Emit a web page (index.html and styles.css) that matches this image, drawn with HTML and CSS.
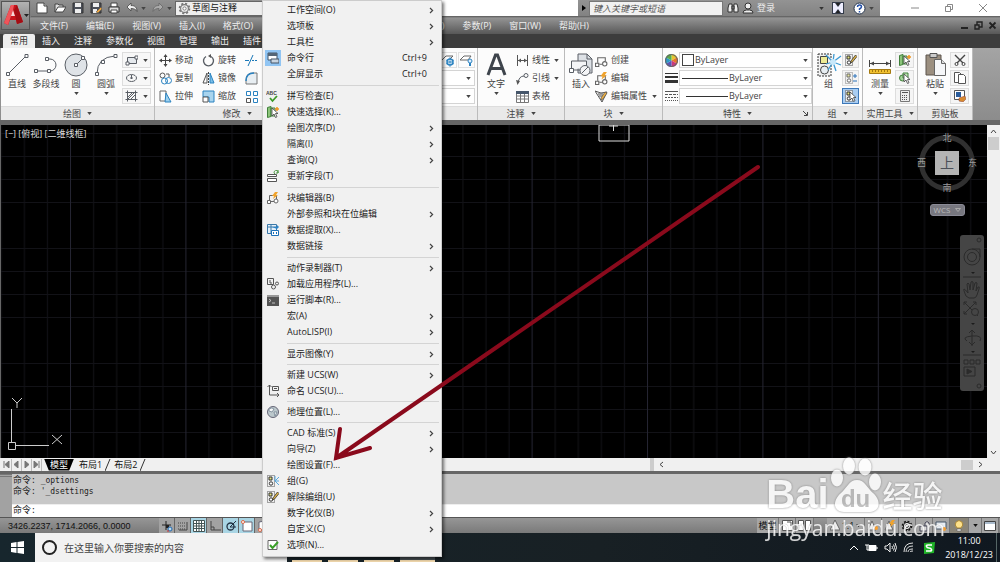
FILE: index.html
```html
<!DOCTYPE html>
<html lang="zh-CN">
<head>
<meta charset="utf-8">
<meta name="viewport" content="width=device-width, initial-scale=1">
<title>AutoCAD</title>
<link rel="stylesheet" href="styles.css">
</head>
<body>
<svg class="defs" aria-hidden="true">
  <symbol id="down" viewBox="0 0 6 4"><path d="M0 0h6L3 4z" fill="currentColor"/></symbol>
  <symbol id="right" viewBox="0 0 5 7"><path d="M1 1l2.600 2.500L1 6" fill="none" stroke="currentColor" stroke-width="1.200"/></symbol>
  <symbol id="bolt" viewBox="0 0 12 12"><path d="M8 0L5 4h2L6 7l5-4H9l2-3z" fill="#f0a32c"/></symbol>
  <symbol id="block" viewBox="0 0 12 12"><path d="M2.500 8V3.500h7V7M4 9.500h3" fill="none" stroke="#666"/><path d="M.500 8.500h3v3h-3z" fill="#fff" stroke="#666"/><circle cx="9" cy="9" r="2" fill="#fff" stroke="#666"/></symbol>
  <symbol id="group" viewBox="0 0 12 12"><path d="M.500.500h7v11h-7z" fill="#eee" stroke="#555" stroke-dasharray="1 1"/><path d="M2 2h3v3H2z" fill="#e4e27c" stroke="#333"/><circle cx="4" cy="8.500" r="1.700" fill="#fff" stroke="#333"/></symbol>
  <symbol id="cursor" viewBox="0 0 12 12"><path d="M5 2v8l2-2 1.500 3.500 1.500-.700L8.500 7.500H11z" fill="#fff" stroke="#444" stroke-width=".8"/></symbol>
  <symbol id="gear" viewBox="0 0 12 12"><circle cx="6" cy="6" r="4.500" fill="none" stroke="currentColor" stroke-width="1.700" stroke-dasharray="1.900 1.630"/><circle cx="6" cy="6" r="3.600" fill="#eee" stroke="currentColor"/><circle cx="6" cy="6" r="1.500" fill="#fff" stroke="currentColor" stroke-width=".8"/></symbol>
  <symbol id="quick" viewBox="0 0 12 12"><path d="M.500 1.500L4 .500v10l-3.500 1z" fill="#8cc47a" stroke="#40803a"/><path d="M4 2h4v8H4z" fill="#cfe8c4" stroke="#40803a"/><use href="#cursor"/><path d="M8 3h4M10 1v4" stroke="#ee9520" stroke-width="1.500"/></symbol>
  <symbol id="pencil" viewBox="0 0 12 12"><path d="M6 7l4.500-6L12 2.500 7.500 8 5.500 9z" fill="#e1b545" stroke="#333" stroke-width=".8"/></symbol>
</svg>

<div class="app">
  <header class="top">
    <button class="logo" aria-label="应用程序菜单">
      <svg width="28" height="27" viewBox="0 0 28 27"><path d="M2 21L9 3h6l6 17-6 2-1-4H8l-2 5z" fill="#c8141c"/><path d="M9 3h3l-1 5-3 9-2 6-4-2z" fill="#f0545a"/><path d="M11 8l2 6h-4z" fill="#f6d8d8"/><path d="M21 20l-6 2-3-14 3-5z" fill="#a30d14"/><path d="M22 12h5l-2.500 3z" fill="#222"/></svg>
    </button>
    <div class="titlebar">
      <div class="quick">
        <button class="qb" aria-label="新建"><svg width="12" height="12" viewBox="0 0 12 12"><path d="M1 1h7l3 3v7H1z" fill="#fff" stroke="#444"/><path d="M8 1v3h3" fill="#ccc" stroke="#444"/></svg></button>
        <button class="qb" aria-label="打开"><svg width="12" height="12" viewBox="0 0 12 12"><path d="M1 10V2h3l1 1h4v2" fill="#ddd" stroke="#444"/><path d="M1 10l3-5h8l-3 5z" fill="#fff" stroke="#444"/></svg></button>
        <button class="qb" aria-label="保存"><svg width="12" height="12" viewBox="0 0 12 12"><path d="M1 1h10v10H1z" fill="#4b4f58" stroke="#333"/><path d="M3 1h6v4H3zM3 7h6v4H3z" fill="#eee"/></svg></button>
        <button class="qb" aria-label="另存为"><svg width="12" height="12" viewBox="0 0 12 12"><path d="M1 1h10v10H1z" fill="#4b4f58" stroke="#333"/><path d="M3 1h6v4H3zM3 7h4v4H3z" fill="#eee"/><path d="M6 10l5-5 1 2-4 4z" fill="#f0a840" stroke="#555" stroke-width=".6"/></svg></button>
        <button class="qb" aria-label="打印"><svg width="12" height="12" viewBox="0 0 12 12"><path d="M3 1h6v4H3z" fill="#fff" stroke="#444"/><path d="M1 5h10v5H1z" fill="#ddd" stroke="#333"/><path d="M3 8h6v3H3z" fill="#fff" stroke="#444"/></svg></button>
        <button class="qb wide" aria-label="放弃"><svg width="12" height="12" viewBox="0 0 12 12"><path d="M1 5l4-4v2.500c4 0 6 2 6 6-1-2-3-3-6-3V9z" fill="#eee" stroke="#444" stroke-width=".8"/></svg><svg class="dn"><use href="#down"/></svg></button>
        <button class="qb wide" aria-label="重做"><svg width="12" height="12" viewBox="0 0 12 12"><path d="M11 5L7 1v2.500c-4 0-6 2-6 6 1-2 3-3 6-3V9z" fill="#aaa" stroke="#666" stroke-width=".8"/></svg><svg class="dn"><use href="#down"/></svg></button>
        <div class="workspace"><svg width="13" height="13" class="gray"><use href="#gear"/></svg><select aria-label="工作空间"><option>草图与注释</option></select></div>
      </div>
      <div class="info">
        <button class="flip" aria-label="展开"><svg width="4" height="6" viewBox="0 0 4 6"><path d="M0 0l4 3-4 3z"/></svg></button>
        <input class="search" type="text" placeholder="键入关键字或短语" aria-label="键入关键字或短语">
        <button aria-label="搜索"><svg width="12" height="12" viewBox="0 0 12 12"><path d="M2 2h3v8H1V6zM10 2H7v8h4V6zM5 4h2v3H5z" fill="#eee" stroke="#333"/></svg></button>
        <button class="login"><svg width="12" height="12" viewBox="0 0 12 12"><circle cx="6" cy="4" r="3" fill="#eee" stroke="#333"/><path d="M1 11q0-3 3.500-3h3q3.500 0 3.500 3z" fill="#eee" stroke="#333"/></svg><span>登录</span><svg class="dn"><use href="#down"/></svg></button>
        <button aria-label="Exchange"><svg width="12" height="12" viewBox="0 0 12 12"><path d="M0 0h12v12H0z" fill="#333b4a"/><path d="M1 1h2l3 4 3-4h2v10H9L6 7l-3 4H1z" fill="#eef"/><path d="M4 1h4L6 4zM4 11h4L6 8z" fill="#222"/></svg></button>
        <button class="help" aria-label="帮助"><svg width="13" height="13" viewBox="0 0 13 13"><circle cx="6.500" cy="6.500" r="5.500" fill="#fff" stroke="#23324a"/><path d="M4.500 5q0-2 2-2t2 1.700q0 1-2 2.300v1M6.500 9v1.500" fill="none" stroke="#234fa8" stroke-width="1.500"/></svg><svg class="dn"><use href="#down"/></svg></button>
      </div>
      <div class="window-buttons">
        <button aria-label="最小化"><svg width="10" height="10" viewBox="0 0 10 10"><path d="M1 5h8"/></svg></button>
        <button aria-label="还原"><svg width="10" height="10" viewBox="0 0 10 10"><path d="M1.500 3.500h5v5h-5zM3.500 3V1.500h5v5H7"/></svg></button>
        <button aria-label="关闭"><svg width="10" height="10" viewBox="0 0 10 10"><path d="M1 1l8 8M9 1L1 9"/></svg></button>
      </div>
    </div>
    <nav class="menubar">
      <button>文件(F)</button><button>编辑(E)</button><button>视图(V)</button><button>插入(I)</button><button>格式(O)</button><button class="after-menu">修改(M)</button><button>参数(P)</button><button>窗口(W)</button><button>帮助(H)</button>
      <div class="doc-buttons">
        <button aria-label="最小化文档"><svg width="9" height="9" viewBox="0 0 9 9"><path d="M1 7h7" stroke="#222" stroke-width="2"/></svg></button>
        <button aria-label="还原文档"><svg width="9" height="9" viewBox="0 0 9 9"><path d="M1 4h4v4H1zM3 4V1h5v5H5" fill="none" stroke="#222" stroke-width="1.400"/></svg></button>
        <button aria-label="关闭文档"><svg width="9" height="9" viewBox="0 0 9 9"><path d="M1.500 1.500l6 6M7.500 1.500l-6 6" stroke="#222" stroke-width="1.800"/></svg></button>
      </div>
    </nav>
  </header>

  <nav class="tabs"><button class="active">常用</button><button>插入</button><button>注释</button><button>参数化</button><button>视图</button><button>管理</button><button>输出</button><button>插件</button></nav>

  <section class="ribbon">
    <div class="panel p-draw">
      <div class="body">
        <button class="big"><svg width="26" height="26" viewBox="0 0 26 26" class="line"><path d="M4 22L22 4"/><path d="M2.500 20.500h3v3h-3zM21 2.500h3v3h-3z" fill="#fff"/></svg>直线</button>
        <button class="big"><svg width="26" height="26" viewBox="0 0 26 26" class="line"><path d="M4 19h13a6 6 0 0 0 0-12h-3"/><path d="M1.500 17.500h3v3h-3zM14.500 17.500h3v3h-3zM12.500 5.500h3v3h-3z" fill="#fff"/></svg>多段线</button>
        <button class="big"><svg width="26" height="26" viewBox="0 0 26 26" class="line"><circle cx="13" cy="13" r="11" fill="#dfe3e7"/><path d="M13 13l6-6"/><path d="M11.500 11.500h3v3h-3zM18.500 4.500h3v3h-3z" fill="#fff"/></svg>圆<svg class="dn"><use href="#down"/></svg></button>
        <button class="big"><svg width="26" height="26" viewBox="0 0 26 26" class="line"><path d="M4 22Q4 5 22 4"/><path d="M2.500 20.500h3v3h-3zM8.500 8.500h3v3h-3zM21 2.500h3v3h-3z" fill="#fff"/></svg>圆弧<svg class="dn"><use href="#down"/></svg></button>
        <div class="stack split">
          <button aria-label="矩形"><svg width="13" height="12" viewBox="0 0 13 12" class="line"><path d="M2.500 3.500h9v6h-9z" fill="#e5e9ed"/><path d="M1 8h3v3H1zM10 2h3v3h-3z" fill="#fff"/></svg><svg class="dn"><use href="#down"/></svg></button>
          <button aria-label="椭圆"><svg width="13" height="12" viewBox="0 0 13 12" class="line"><ellipse cx="6.500" cy="6" rx="5" ry="3.500"/><path d="M6.500 3v4M5 6h3"/></svg><svg class="dn"><use href="#down"/></svg></button>
          <button aria-label="图案填充"><svg width="13" height="12" viewBox="0 0 13 12" class="line"><path d="M2.500.500v11M10.500.500v11M.500 2.500h12M.500 9.500h12M3 7l4-4M3 9l6-6M6 9l4-4"/></svg><svg class="dn"><use href="#down"/></svg></button>
        </div>
      </div>
      <button class="title">绘图<svg class="dn"><use href="#down"/></svg></button>
    </div>
    <div class="panel p-modify">
      <div class="body modify">
        <button class="row"><svg width="13" height="13" viewBox="0 0 13 13"><path d="M6.500 1v11M1 6.500h11" stroke="#444"/><path d="M4.500 3l2-3 2 3zM4.500 10l2 3 2-3zM3 4.500l-3 2 3 2zM10 4.500l3 2-3 2z" fill="#444"/></svg>移动</button>
        <button class="row"><svg width="13" height="13" viewBox="0 0 13 13" class="line"><path d="M4 2.500a5 5 0 1 0 5 0" stroke-width="1.400"/><path d="M9 0v4L6 2z" fill="#555" stroke="none"/></svg>旋转</button>
        <button class="row" aria-label="修剪"><svg width="13" height="13" viewBox="0 0 13 13"><path d="M0 6.500h4M3 12L8 1" stroke="#1a78b8"/><path d="M7 6.500h6" stroke="#1a78b8" stroke-dasharray="2 1"/></svg></button>
        <button class="row"><svg width="13" height="13" viewBox="0 0 13 13" fill="none"><circle cx="3.500" cy="3.500" r="2.500" stroke="#555"/><path d="M7 2h3v3" stroke="#555"/><circle cx="5.500" cy="9" r="3" stroke="#2a82c0" fill="#fff"/><circle cx="9.500" cy="8.500" r="3" stroke="#2a82c0"/></svg>复制</button>
        <button class="row"><svg width="13" height="13" viewBox="0 0 13 13"><path d="M5 1v10H1z" fill="#fff" stroke="#555"/><path d="M8 1v10h4z" fill="#7cc0e8" stroke="#2a82c0"/><path d="M6.500 0v13" stroke="#444" stroke-dasharray="2 1"/></svg>镜像</button>
        <button class="row" aria-label="圆角"><svg width="13" height="13" viewBox="0 0 13 13"><path d="M1 12V8q0-7 7-7h4v11z" fill="#e8eef2" stroke="#777"/><path d="M1 9q0-8 8-8" fill="none" stroke="#2a82c0" stroke-width="1.500"/></svg></button>
        <button class="row"><svg width="13" height="13" viewBox="0 0 13 13"><path d="M1 1h6v10H1z" fill="#fff" stroke="#666"/><path d="M7 3l5 9H6z" fill="#9cd0ee" stroke="#2a82c0"/></svg>拉伸</button>
        <button class="row"><svg width="13" height="13" viewBox="0 0 13 13"><path d="M1 1h11v11H7V7H1z" fill="#a8d4ee" stroke="#2a82c0"/><path d="M1 7h5v5H1z" fill="#fff" stroke="#555"/></svg>缩放</button>
        <button class="row" aria-label="阵列"><svg width="13" height="13" viewBox="0 0 13 13" fill="#fff"><path d="M1.500 1.500h4v4h-4zM8.500 1.500h4v4h-4zM8.500 8.500h4v4h-4z" stroke="#2a82c0"/><path d="M1.500 8.500h4v4h-4z" stroke="#555"/></svg></button>
      </div>
      <button class="title">修改<svg class="dn"><use href="#down"/></svg></button>
    </div>
    <div class="panel p-layer">
      <div class="body layers">
        <div class="layer-tools">
          <button aria-label="图层冻结"><svg width="14" height="13" viewBox="0 0 14 13"><path d="M1 6l4-4h7l-3 3" fill="#fff" stroke="#666"/><circle cx="9" cy="8" r="3" fill="#fff" stroke="#2a82c0" stroke-width="1.500"/><path d="M9 3v10M5 6l8 4M13 6l-8 4" stroke="#2a82c0" stroke-width=".7"/></svg></button>
          <button aria-label="图层关闭"><svg width="14" height="13" viewBox="0 0 14 13"><path d="M1 6l4-4h7l-3 4z" fill="#fff" stroke="#666"/><circle cx="11" cy="7" r="2" fill="#def" stroke="#2a82c0"/><path d="M10 9h2v3h-2z" fill="#2a82c0"/></svg></button>
        </div>
        <div class="combo"><select aria-label="图层状态"><option></option></select><svg class="dn"><use href="#down"/></svg></div>
        <div class="combo"><select aria-label="图层"><option></option></select><svg class="dn"><use href="#down"/></svg></div>
      </div>
      <div class="title"></div>
    </div>
    <div class="panel p-note">
      <div class="body">
        <button class="big"><svg width="26" height="26" viewBox="0 0 26 26"><path d="M5 23L12.500 3h2L22 23M8 16.500h11" fill="none" stroke="#3e444c" stroke-width="3"/></svg>文字<svg class="dn"><use href="#down"/></svg></button>
        <div class="stack">
          <button class="row"><svg width="13" height="13" viewBox="0 0 13 13"><path d="M1.500 1v11M11.500 1v11M2 6.500h9" stroke="#555"/><path d="M2 6.500l3-2v4zM11 6.500l-3-2v4z" fill="#555"/></svg>线性<svg class="dn"><use href="#down"/></svg></button>
          <button class="row"><svg width="13" height="13" viewBox="0 0 13 13" class="line"><path d="M2 11Q3 4 8 4"/><path d="M0 8l1.500 5L4 9z" fill="#555" stroke="none"/><circle cx="10" cy="3.500" r="2"/></svg>引线<svg class="dn"><use href="#down"/></svg></button>
          <button class="row"><svg width="13" height="13" viewBox="0 0 13 13"><path d="M.500 1.500h12v11H.500zM.500 6h12M.500 9h12M4.500 3v9M8.500 3v9" fill="#fff" stroke="#777"/><path d="M0 1h13v3H0z" fill="#46566a"/></svg>表格</button>
        </div>
      </div>
      <button class="title">注释<svg class="dn"><use href="#down"/></svg></button>
    </div>
    <div class="panel p-block">
      <div class="body">
        <button class="big"><svg width="26" height="26" viewBox="0 0 26 26" class="line"><path d="M10 14V2h9l5 5v14H10z" fill="#dde1e6"/><path d="M19 2v5h5"/><path d="M3.500 18v-9h15v6" fill="#f4f5f7"/><path d="M3 18h11"/><path d="M1.500 16.500h4v4h-4z" fill="#fff"/><circle cx="17" cy="18.500" r="5" fill="#f4f5f7"/><path d="M14 21l6-6"/></svg>插入</button>
        <div class="stack">
          <button class="row"><svg width="13" height="13"><use href="#block"/></svg>创建</button>
          <button class="row"><svg width="13" height="13"><use href="#block"/><use href="#bolt"/></svg>编辑</button>
          <button class="row"><svg width="13" height="13" viewBox="0 0 13 13"><path d="M0 1l6 2 6-1-5 10z" fill="#eee" stroke="#555"/><path d="M3 4h5M4 6h4" stroke="#555"/><path d="M6 8l4-6 2 1-4 6-2 1z" fill="#f0b040" stroke="#555" stroke-width=".7"/></svg>编辑属性<svg class="dn"><use href="#down"/></svg></button>
        </div>
      </div>
      <button class="title">块<svg class="dn"><use href="#down"/></svg></button>
    </div>
    <div class="panel p-prop">
      <div class="body props">
        <svg width="13" height="13" viewBox="0 0 12 12"><path d="M6 6V0a6 6 0 0 1 5.200 3z" fill="#e6c62c"/><path d="M6 6l5.200-3a6 6 0 0 1 0 6z" fill="#e8762c"/><path d="M6 6l5.200 3A6 6 0 0 1 6 12z" fill="#c93a7c"/><path d="M6 6v6A6 6 0 0 1 .8 9z" fill="#5a55b8"/><path d="M6 6L.8 9a6 6 0 0 1 0-6z" fill="#2e9ac8"/><path d="M6 6L.8 3A6 6 0 0 1 6 0z" fill="#58ac4a"/><circle cx="6" cy="6" r="5.500" fill="none" stroke="#666"/></svg>
        <div class="combo"><span class="swatch"></span><select aria-label="对象颜色"><option>ByLayer</option></select><svg class="dn"><use href="#down"/></svg></div>
        <svg width="13" height="13" viewBox="0 0 13 13" stroke="#333"><path d="M0 1.500h13"/><path d="M0 5h13" stroke-width="2"/><path d="M0 9.500h13" stroke-width="3"/></svg>
        <div class="combo"><span class="rule"></span><select aria-label="线宽"><option>ByLayer</option></select><svg class="dn"><use href="#down"/></svg></div>
        <svg width="13" height="13" viewBox="0 0 13 13" stroke="#555"><path d="M0 1.500h13"/><path d="M0 4.500h13" stroke-dasharray="3 1"/><path d="M0 7.500h13" stroke-dasharray="2 1"/><path d="M0 10.500h13" stroke-dasharray="1 1"/></svg>
        <div class="combo"><span class="rule inset"></span><select aria-label="线型"><option>ByLayer</option></select><svg class="dn"><use href="#down"/></svg></div>
      </div>
      <button class="title">特性<svg class="dn"><use href="#down"/></svg><svg class="launch" width="5" height="5" viewBox="0 0 5 5"><path d="M0 0l4 4M4.500 1v3.500H1" fill="none" stroke="#444"/></svg></button>
    </div>
    <div class="panel p-tight">
      <div class="body">
        <button class="big"><svg width="26" height="26" viewBox="0 0 26 26"><path d="M2 2h13v22H2z" fill="#f1f1f1" stroke="#333" stroke-dasharray="2 1"/><path d="M4.500 4.500h7v7h-7z" fill="#ecea94" stroke="#444"/><circle cx="8.500" cy="18" r="4" fill="#e8eef2" stroke="#444"/><path d="M17 10l8-6M17 10l8 3M17 10l-7-7M17 10l1-8M17 10l3 9M17 10l-5 8M17 10l-7 2" stroke="#3d9bd4" stroke-width="1.300"/><circle cx="17" cy="10" r="3" fill="#c8e8fa"/></svg>组</button>
        <div class="stack boxed">
          <button aria-label="解除编组"><svg width="12" height="12"><use href="#group"/><use href="#pencil"/></svg></button>
          <button aria-label="组编辑"><svg width="12" height="12" viewBox="0 0 12 12"><use href="#group" opacity=".7"/><path d="M8 4h4M10 2v4M8 9h4" stroke="#2a70b8"/></svg></button>
          <button class="on" aria-label="启用组选择"><svg width="12" height="12"><use href="#group"/><use href="#cursor"/></svg></button>
        </div>
      </div>
      <button class="title">组<svg class="dn"><use href="#down"/></svg></button>
    </div>
    <div class="panel p-util">
      <div class="body">
        <button class="big"><svg width="26" height="26" viewBox="0 0 26 26"><path d="M2.500 8v7M23.500 8v7M3 11.500h20" stroke="#444" fill="none"/><path d="M3 11.500l4-2v4zM23 11.500l-4-2v4z" fill="#444"/><path d="M2.500 17.500h21v4h-21z" fill="#f0c030" stroke="#a47a10"/><path d="M5.500 18v2M8.500 18v2M11.500 18v2M14.500 18v2M17.500 18v2M20.500 18v2" stroke="#a47a10"/></svg>测量<svg class="dn"><use href="#down"/></svg></button>
        <div class="stack boxed">
          <button aria-label="快速选择"><svg width="12" height="12"><use href="#quick"/></svg></button>
          <button aria-label="全部选择"><svg width="12" height="12" viewBox="0 0 12 12"><circle cx="3.500" cy="6" r="3" fill="#a4d49a" stroke="#40803a"/><path d="M4 1h5v5H4z" fill="#c0e4b4" stroke="#40803a"/><use href="#cursor"/></svg></button>
          <button aria-label="快速计算器"><svg width="12" height="12" viewBox="0 0 12 12"><path d="M1.500.500h9v11h-9z" fill="#eee" stroke="#777"/><path d="M3 2.500h6" stroke="#555"/><path d="M3 5.500h6M3 7.500h6M3 9.500h6" stroke="#555" stroke-dasharray="1 1"/></svg></button>
        </div>
      </div>
      <button class="title">实用工具<svg class="dn"><use href="#down"/></svg></button>
    </div>
    <div class="panel p-util">
      <div class="body">
        <button class="big"><svg width="26" height="26" viewBox="0 0 26 26"><path d="M4 3h15v20H4z" fill="#9b8f80" stroke="#5c554c"/><path d="M8 1.500h7v4H8z" fill="#ccc" stroke="#555"/><path d="M12.500 7.500h7l4 4v12h-11z" fill="#f5f6f8" stroke="#666"/><path d="M19.500 7.500v4h4" fill="#ddd" stroke="#666"/></svg>粘贴<svg class="dn"><use href="#down"/></svg></button>
        <div class="stack boxed">
          <button aria-label="剪切"><svg width="12" height="12" viewBox="0 0 12 12"><path d="M1 1l8 8M11 1L3 9" stroke="#444" stroke-width="1.400"/><circle cx="2.500" cy="10" r="1.500" fill="none" stroke="#444"/><circle cx="9.500" cy="10" r="1.500" fill="none" stroke="#444"/></svg></button>
          <button aria-label="复制到剪贴板"><svg width="12" height="12" viewBox="0 0 12 12" fill="#fff" stroke="#555"><path d="M.500.500h5l2 2v8h-7z"/><path d="M4.500 2.500h5l2 2v7h-7z"/></svg></button>
          <button aria-label="特性匹配"><svg width="12" height="12" viewBox="0 0 12 12"><path d="M.500.500h10v9H.500z" fill="#fff" stroke="#555"/><path d="M2 2h5v5H2z" fill="#2a5c9c"/><path d="M5 8l6-2 1 3-3 3-4-1z" fill="#d88a30" stroke="#844" stroke-width=".5"/></svg></button>
        </div>
      </div>
      <div class="title">剪贴板</div>
    </div>
  </section>

  <main class="drawing">
    <div class="canvas">
      <svg class="grid" width="100%" height="100%">
        <defs><pattern id="cells" x="69" y="-15" width="115.4" height="115" patternUnits="userSpaceOnUse"><path d="M23.600 0v115M46.700 0v115M69.800 0v115M92.900 0v115M0 23.500h116M0 46.500h116M0 69.500h116M0 92.500h116" stroke="#121217"/><path d="M.500 0v115M0 .500h116" stroke="#242431"/></pattern></defs>
        <rect width="100%" height="100%" fill="url(#cells)"/>
      </svg>
      <span class="view-label">[−] [俯视] [二维线框]</span>
      <svg class="pickbox" width="32" height="17" viewBox="0 0 32 17"><path d="M1 0h30v16H1zM11 1h9M15.500 0v6" fill="none" stroke="#ddd"/></svg>
      <svg class="ucs" width="62" height="56" viewBox="0 0 62 56"><path d="M10.500 11v33M15 47.500h33M7.500 44.500h7v7h-7z" fill="none" stroke="#ccc"/><path d="M11 0l5 5 5-5M16 5v5M51 37l10 9M61 37l-10 9" fill="none" stroke="#ccc"/></svg>
      <div class="cube">
        <span class="n">北</span><span class="w">西</span><button>上</button><span class="e">东</span><span class="s">南</span>
      </div>
      <button class="wcs">WCS<svg width="6" height="4" viewBox="0 0 6 4"><path d="M.500.500h5L3 3.500z" fill="none" stroke="#aaa"/></svg></button>
      <svg class="navbar" width="24" height="156" viewBox="0 0 24 156"><rect width="24" height="156" rx="3" fill="#454545"/><g fill="none" stroke="#2b2b2b"><circle cx="19" cy="5" r="2"/><circle cx="19" cy="151" r="2"/><circle cx="12" cy="22" r="8"/><circle cx="12" cy="22" r="4.500"/><path d="M12 14h8v8M3 42h18M3 120h18"/><path d="M6 61q-3-7-2-7t4 4l-1-9q1-2 2 0l1 6 1-8q1-1 2 0v8l2-7q1-1 2 0l-1 8 2-4q2-1 1 2l-2 6q-1 3-3 3H9z"/><path d="M4 67l14 14M16 67L4 79M4 70v-3h3M13 67h3v3M4 76v3h3"/><circle cx="15" cy="77" r="3.500" fill="#454545"/><path d="M12 95v16M9 98l3-3 3 3M9 107l3 3 3-3M7 106q-6-4 5-5t8 5"/><path d="M4 125h4v4H4zM10 125h4v4h-4zM16 125h4v4h-4zM4 132h11v9H4z"/><path d="M7 134l5 2.500-5 2.500z" fill="#2b2b2b"/></g><path d="M11 37h4l-2 2zM11 88h4l-2 2zM11 116h4l-2 2z" fill="#1c1c1c"/></svg>
    </div>
    <div class="vscroll"><button aria-label="向上滚动"><svg width="7" height="5" viewBox="0 0 7 5"><path d="M1 4l2.500-3L6 4"/></svg></button><span class="thumb"></span><button class="end" aria-label="向下滚动"><svg width="7" height="5" viewBox="0 0 7 5"><path d="M1 1l2.500 3L6 1"/></svg></button></div>
  </main>

  <div class="layouts">
    <button class="step" aria-label="第一个"><svg width="7" height="7" viewBox="0 0 7 7"><path d="M1 0v7M6 0L2 3.500 6 7z"/></svg></button>
    <button class="step" aria-label="上一个"><svg width="7" height="7" viewBox="0 0 7 7"><path d="M5 0L1 3.500 5 7z"/></svg></button>
    <button class="step" aria-label="下一个"><svg width="7" height="7" viewBox="0 0 7 7"><path d="M2 0l4 3.500L2 7z"/></svg></button>
    <button class="step" aria-label="最后一个"><svg width="7" height="7" viewBox="0 0 7 7"><path d="M6 0v7M1 0l4 3.500L1 7z"/></svg></button>
    <button class="sheet current">模型</button><button class="sheet">布局1</button><svg class="slash" width="6" height="12" viewBox="0 0 6 12"><path d="M0 12L5 0" stroke="#333"/></svg><button class="sheet">布局2</button><svg class="slash" width="6" height="12" viewBox="0 0 6 12"><path d="M0 12L5 0" stroke="#333"/></svg>
    <div class="hscroll"><button aria-label="向左滚动"><svg width="5" height="7" viewBox="0 0 5 7"><path d="M4 1L1 3.500 4 6"/></svg></button><span class="thumb"></span><button aria-label="向右滚动"><svg width="5" height="7" viewBox="0 0 5 7"><path d="M1 1l3 2.500L1 6"/></svg></button></div>
  </div>

  <section class="command">
    <div class="grip"></div>
    <div class="console">
      <div class="history"><p><b>命令</b>: _options</p><p><b>命令</b>: '_dsettings</p></div>
      <label class="prompt"><span><b>命令</b>:</span><input type="text"></label>
    </div>
  </section>

  <footer class="status">
    <span class="coords">3426.2237, 1714.2066, 0.0000</span>
    <div class="toggles">
      <button aria-label="推断约束"><svg width="12" height="12" viewBox="0 0 12 12"><path d="M5 1v9M1 5h9" stroke="#222"/><path d="M5 5h3v3H5z" fill="#222"/><circle cx="9" cy="9" r="2" fill="#bde" stroke="#2268b0"/><path d="M7 10v2" stroke="#c33"/></svg></button>
      <button aria-label="捕捉模式"><svg width="12" height="12" viewBox="0 0 12 12"><path d="M1 3h7M1 6h7M1 9h7" stroke="#444" stroke-dasharray="1 1"/><path d="M10 2v8H2" fill="none" stroke="#444"/></svg></button>
      <button class="lit" aria-label="栅格显示"><svg width="12" height="12" viewBox="0 0 12 12"><path d="M.500.500h11v11H.500zM3.500 0v12M6 0v12M8.500 0v12M0 3.500h12M0 6h12M0 8.500h12" fill="#fff" stroke="#455"/></svg></button>
      <button aria-label="正交模式"><svg width="12" height="12" viewBox="0 0 12 12"><path d="M2 1v9h10M2 7h3v3" fill="none" stroke="#444"/></svg></button>
      <button class="lit" aria-label="极轴追踪"><svg width="12" height="12" viewBox="0 0 12 12"><circle cx="5.500" cy="6.500" r="3.500" fill="none" stroke="#234" stroke-width="1.300"/><path d="M5 7h6M5 7l6-6" stroke="#234"/></svg></button>
      <button class="lit" aria-label="对象捕捉"><svg width="12" height="12" viewBox="0 0 12 12"><path d="M2 2h9v9H2z" fill="#fff" stroke="#667"/><circle cx="2" cy="2" r="1.500" fill="#fff" stroke="#d64"/></svg></button>
      <button aria-label="三维对象捕捉"><svg width="12" height="12" viewBox="0 0 12 12"><path d="M2 2l6-1v9H2z" fill="#fff" stroke="#667"/><circle cx="3" cy="10" r="1.500" fill="#fff" stroke="#d64"/></svg></button>
    </div>
    <div class="tools">
      <button class="model">模型</button>
      <button aria-label="快速查看布局"><svg width="11" height="11" viewBox="0 0 11 11"><path d="M.500.500h10v10H.500z" fill="#fff" stroke="#555"/><path d="M5 2h4v4" fill="none" stroke="#555"/></svg></button>
      <button class="gap" aria-label="快速查看图形"><svg width="13" height="11" viewBox="0 0 13 11"><path d="M.500.500h5v10h-5zM7.500.500h5v10h-5z" fill="#fff" stroke="#555"/></svg></button>
      <button class="scale"><svg width="10" height="11" viewBox="0 0 10 11"><path d="M5 0l5 10H0z" fill="#eee" stroke="#666"/></svg>1:1<svg class="dn"><use href="#down"/></svg></button>
      <button aria-label="注释可见性"><svg width="12" height="12" viewBox="0 0 12 12"><path d="M5 1l4 9H1z" fill="#eee" stroke="#666"/><circle cx="9" cy="8" r="2" fill="#f8a030"/></svg></button>
      <button aria-label="自动缩放"><svg width="12" height="12" viewBox="0 0 12 12"><path d="M5 1l4 9H1z" fill="#eee" stroke="#666"/><use href="#bolt"/></svg></button>
      <button aria-label="切换工作空间"><svg width="12" height="12"><use href="#gear"/></svg></button>
      <button aria-label="锁定"><svg width="12" height="12" viewBox="0 0 12 12"><path d="M2 6h7v5H2zM7 6V3q2-3 4 0v2" fill="#ddd" stroke="#445"/></svg></button>
      <button aria-label="硬件加速"><svg width="12" height="12" viewBox="0 0 12 12"><path d="M1 2h10v7H1z" fill="#e8eef4" stroke="#456"/><circle cx="9" cy="9" r="2" fill="#f8a030"/></svg></button>
      <button class="bulb" aria-label="隔离对象"><svg width="10" height="12" viewBox="0 0 10 12"><path d="M3 8Q0 5 2 2q3-3 6 0 2 3-1 6z" fill="#ffe28a" stroke="#a8873a"/><path d="M3 9h4v2H3z" fill="#eee" stroke="#555" stroke-width=".5"/></svg></button>
      <button class="more" aria-label="状态栏菜单"><svg class="dn"><use href="#down"/></svg></button>
      <button aria-label="全屏显示"><svg width="12" height="10" viewBox="0 0 12 10"><path d="M.500.500h11v9H.500z" fill="#fff" stroke="#444"/><path d="M1 1h10v2H1z" fill="#abc"/></svg></button>
    </div>
  </footer>

  <div class="taskbar">
    <button class="start" aria-label="开始"><svg width="13" height="13" viewBox="0 0 13 13"><path d="M0 2l5.500-1v5H0zM6.500 1L13 0v6H6.500zM0 7h5.500v5L0 11zM6.500 7H13v6l-6.500-1z" fill="#fff"/></svg></button>
    <label class="find"><svg width="17" height="17" viewBox="0 0 17 17"><circle cx="8.500" cy="8.500" r="6.500" fill="none" stroke="#222" stroke-width="2"/></svg><input type="text" placeholder="在这里输入你要搜索的内容" aria-label="在这里输入你要搜索的内容"></label>
    <div class="running"><i></i><i></i><i></i><i class="front"></i></div>
    <div class="tray">
      <svg width="10" height="6" viewBox="0 0 10 6"><path d="M1 5l4-4 4 4" fill="none" stroke="#fff"/></svg>
      <svg width="13" height="9" viewBox="0 0 13 9"><path d="M4 2.500h7v5H4z" fill="#fff" stroke="#fff"/><path d="M12 4v2M2 4v3h2M1 1v2h2V1" stroke="#fff" fill="none"/></svg>
      <svg width="13" height="11" viewBox="0 0 13 11"><path d="M1 4h2l3-3v9L3 7H1zM8 4q1 1.500 0 3M9.500 2.500q2 3 0 6M11 1q3 4.500 0 9" fill="none" stroke="#eee"/></svg>
      <svg width="11" height="11" viewBox="0 0 11 11"><path d="M1 10Q1 1 10 1M3 10q0-6 7-6M5 10q0-3 5-3M7 10q0-1 3-1" fill="none" stroke="#ddd"/></svg>
      <svg class="ime" width="12" height="12" viewBox="0 0 12 12"><path d="M1 1l11-1-1 11-10 1z" fill="#20b428"/><path d="M9 3H5Q3 3 3.500 4.500t2.500 1.500 2.500 1.500T7 9H3" fill="none" stroke="#fff" stroke-width="1.600"/></svg>
      <div class="clock"><span>11:00</span><span>2018/12/23</span></div>
    </div>
  </div>
</div>

<div class="menu" role="menu">
  <div class="set long">
    <button role="menuitem"><i></i>工作空间(O)<svg class="sub"><use href="#right"/></svg></button>
    <button role="menuitem"><i></i>选项板<svg class="sub"><use href="#right"/></svg></button>
    <button role="menuitem"><i></i>工具栏<svg class="sub"><use href="#right"/></svg></button>
    <button role="menuitem"><i class="checked"><svg width="12" height="12" viewBox="0 0 12 12"><path d="M1 1h9v7H1z" fill="#fff" stroke="#456"/><path d="M1 1h9v3H1z" fill="#567"/><path d="M4 7h8v4H4z" fill="#c8d4e0" stroke="#456"/></svg></i>命令行<kbd>Ctrl+9</kbd></button>
    <button role="menuitem"><i></i>全屏显示<kbd>Ctrl+0</kbd></button>
  </div>
  <div class="set long">
    <button role="menuitem"><i><svg width="14" height="13" viewBox="0 0 14 13"><text x="0" y="5" class="abc">ABC</text><path d="M4 8l2.500 3L11 6" fill="none" stroke="#3a9a28" stroke-width="1.800"/></svg></i>拼写检查(E)</button>
    <button role="menuitem"><i><svg width="12" height="12"><use href="#quick"/></svg></i>快速选择(K)...</button>
    <button role="menuitem"><i></i>绘图次序(D)<svg class="sub"><use href="#right"/></svg></button>
    <button role="menuitem"><i></i>隔离(I)<svg class="sub"><use href="#right"/></svg></button>
    <button role="menuitem"><i></i>查询(Q)<svg class="sub"><use href="#right"/></svg></button>
    <button role="menuitem"><i><svg width="12" height="12" viewBox="0 0 12 12"><path d="M.500 4.500h9v2h-9zM.500 8.500h9v3h-9z" fill="#fff" stroke="#555"/><path d="M8 4a2 2 0 1 1 3-1M11 0v3H9" fill="none" stroke="#4a9440"/></svg></i>更新字段(T)</button>
  </div>
  <div class="set long">
    <button role="menuitem"><i><svg width="12" height="12"><use href="#block"/><use href="#bolt"/></svg></i>块编辑器(B)</button>
    <button role="menuitem"><i></i>外部参照和块在位编辑<svg class="sub"><use href="#right"/></svg></button>
    <button role="menuitem"><i><svg width="12" height="12" viewBox="0 0 12 12"><path d="M.500.500h9v9h-9zM1 3h9M4 1v8" fill="#e4f0fa" stroke="#3a78a8"/><path d="M5 3h5V1l2 2-2 2z" fill="#2c84c8"/><path d="M4.500 6.500h7v5h-7z" fill="#fff" stroke="#1c70b8"/><path d="M6 9h1M9 9h1" stroke="#1c70b8" stroke-width="2"/></svg></i>数据提取(X)...</button>
    <button role="menuitem"><i></i>数据链接<svg class="sub"><use href="#right"/></svg></button>
  </div>
  <div class="set long">
    <button role="menuitem"><i></i>动作录制器(T)<svg class="sub"><use href="#right"/></svg></button>
    <button role="menuitem"><i><svg width="12" height="12" viewBox="0 0 12 12" fill="none" stroke="#555"><path d="M.500.500h6v6h-6zM3 2v3h2"/><circle cx="6.500" cy="9" r="2"/><circle cx="10" cy="5.500" r="1.500"/></svg></i>加载应用程序(L)...</button>
    <button role="menuitem"><i><svg width="12" height="11" viewBox="0 0 12 11"><path d="M0 0h12v11H0z" fill="#555"/><path d="M0 0h12v2H0z" fill="#999"/><path d="M2 4l2 1.500L2 7M5 8h3" fill="none" stroke="#ddd" stroke-width=".8"/></svg></i>运行脚本(R)...</button>
    <button role="menuitem"><i></i>宏(A)<svg class="sub"><use href="#right"/></svg></button>
    <button role="menuitem"><i></i>AutoLISP(I)<svg class="sub"><use href="#right"/></svg></button>
  </div>
  <div class="set"><button role="menuitem"><i></i>显示图像(Y)<svg class="sub"><use href="#right"/></svg></button></div>
  <div class="set">
    <button role="menuitem"><i></i>新建 UCS(W)<svg class="sub"><use href="#right"/></svg></button>
    <button role="menuitem"><i><svg width="12" height="12" viewBox="0 0 12 12" fill="none" stroke="#555"><path d="M2.500 0v10H12M.500 2l2-2 2 2M10 8l2 2-2 2M5.500 1.500h6v4h-6zM7 3.500h3"/></svg></i>命名 UCS(U)...</button>
  </div>
  <div class="set"><button role="menuitem"><i><svg width="12" height="12" viewBox="0 0 12 12"><circle cx="6" cy="6" r="5.500" fill="#bcc8cc" stroke="#667"/><path d="M2 3q3-2 5 0L5 6 2 5zM7 6l3 0-2 4z" fill="#f4f6f6" stroke="#678" stroke-width=".7"/></svg></i>地理位置(L)...</button></div>
  <div class="set">
    <button role="menuitem"><i></i>CAD 标准(S)<svg class="sub"><use href="#right"/></svg></button>
    <button role="menuitem"><i></i>向导(Z)<svg class="sub"><use href="#right"/></svg></button>
    <button role="menuitem"><i></i>绘图设置(F)...</button>
    <button role="menuitem"><i><svg width="12" height="12" viewBox="0 0 12 12"><use href="#group"/><path d="M8 6l4-4M8 6l4 4M8 6h4M8 6V1" stroke="#5aa8dc"/></svg></i>组(G)</button>
    <button role="menuitem"><i><svg width="12" height="12"><use href="#group"/><use href="#pencil"/></svg></i>解除编组(U)</button>
    <button role="menuitem"><i></i>数字化仪(B)<svg class="sub"><use href="#right"/></svg></button>
    <button role="menuitem"><i></i>自定义(C)<svg class="sub"><use href="#right"/></svg></button>
    <button role="menuitem"><i><svg width="12" height="12" viewBox="0 0 12 12"><path d="M1 1.500h9v9H1z" fill="#fff" stroke="#666"/><path d="M3 6l2.500 3L11 3" fill="none" stroke="#3aa028" stroke-width="2"/></svg></i>选项(N)...</button>
  </div>
</div>

<svg class="arrow" width="430" height="300" viewBox="0 0 430 300" fill="none" stroke="#8a0a1c" stroke-width="4" stroke-linecap="round"><path d="M425 3L3 294M7 265l-4 29 34-10"/></svg>

<div class="watermark">
  <div class="brand">
    <span class="latin">Bai</span>
    <span class="paw"><svg width="54" height="58" viewBox="0 0 54 58" fill="#fff"><ellipse cx="8" cy="21" rx="6" ry="8.500"/><ellipse cx="20" cy="9" rx="6" ry="8.500"/><ellipse cx="36" cy="10" rx="6.500" ry="8.500"/><ellipse cx="46" cy="25" rx="6" ry="8.500"/><path d="M28 23c8 0 10 8 16 13 8 7 8 18-3 19H15C3 54 4 43 12 36c6-5 8-13 16-13z"/></svg><span class="du">du</span></span>
    <span class="hanzi">经验</span>
  </div>
  <div class="url">jingyan.baidu.com</div>
</div>
</body>
</html>
```
FILE: styles.css
```css
* { box-sizing: border-box; }

body {
  margin: 0;
  height: 100vh;
  overflow: hidden;
  font: 9px/12px "Open Sans", "Noto Sans CJK SC", sans-serif;
  color: #444;
  background: #000;
}

button, input, select { font: inherit; color: inherit; margin: 0; padding: 0; border: 0; background: none; border-radius: 0; white-space: nowrap; }
select { appearance: none; }
input { min-width: 0; outline: 0; }
i, kbd, b { font: inherit; }
p { margin: 0; }
svg { display: block; flex: none; }
.defs { position: absolute; width: 0; height: 0; }
.line { fill: none; stroke: #5a5f66; }
.dn { width: 5px; height: 3px; }
.gray { color: #777; }

.app { height: 100%; display: flex; flex-direction: column; }

/* Title and menu bars */
.top { display: grid; grid-template: 17px 17px / 31px 1fr; background: linear-gradient(#8c8c8c, #7a7a7a 50%, #929292 54%, #585858); }
.logo { grid-row: 1 / 3; align-self: start; margin: 1px; height: 29px; border: 1px solid #555; background: linear-gradient(#b2b2b2, #777); }
.titlebar { display: flex; background: #fff; border-bottom: 1px solid #666; }
.quick { display: flex; align-items: center; width: 400px; padding-left: 2px; background: linear-gradient(#909090, #7d7d7d); }
.qb { width: 18px; display: flex; justify-content: center; align-items: center; }
.qb.wide { width: 26px; gap: 3px; }
.workspace { display: flex; align-items: center; gap: 1px; width: 130px; height: 15px; padding-left: 2px; border: 1px solid #666; background: #eee; }
.workspace select { color: #111; }
.info { display: flex; align-items: center; margin-left: auto; width: 302px; background: linear-gradient(#939393, #828282); }
.info button { display: flex; align-items: center; justify-content: center; gap: 3px; width: 19px; }
.info .flip { width: 11px; }
.info .search { flex: 1; height: 15px; padding: 0 3px; background: #f1f1f1; border: 1px solid #777; font-style: italic; }
.search::placeholder { color: #555; opacity: 1; }
.info .login { width: 86px; justify-content: flex-start; color: #eee; }
.login .dn { margin-left: auto; margin-right: 4px; color: #333; }
.info .help { width: 33px; }
.window-buttons { display: flex; width: 120px; padding-left: 18px; }
.window-buttons button { flex: 1; display: flex; align-items: center; justify-content: center; }
.window-buttons path { fill: none; stroke: #888; }
.menubar { display: flex; align-items: center; color: #eee; }
.menubar > button { padding: 0 9px; }
.menubar > .after-menu { margin-left: 142px; }
.doc-buttons { display: flex; gap: 5px; margin-left: auto; padding-right: 3px; }
.tabs { display: flex; height: 14px; padding-left: 3px; background: #3d3d3d; color: #eee; flex: none; }
.tabs button { padding: 0 7px; }
.tabs .active { background: #eee; color: #333; border-radius: 2px 2px 0 0; }

/* Ribbon */
.ribbon { display: flex; flex: none; height: 77px; padding-left: 1px; border-bottom: 5px solid #666; background: linear-gradient(#a4a4a4, #8c8c8c); }
.panel { display: flex; flex-direction: column; flex: none; border-right: 1px solid #bbb; background: #fcfcfc; }
.body { display: flex; flex: 1; padding: 3px 2px 0; }
.title { display: flex; align-items: center; justify-content: center; gap: 6px; height: 14px; background: #e9e9e9; border-top: 1px solid #ddd; position: relative; }
.launch { position: absolute; right: 4px; }
.p-draw { width: 154px; }
.p-modify { width: 165px; }
.p-layer { width: 158px; }
.p-note { width: 87px; }
.p-block { width: 98px; }
.p-prop { width: 150px; }
.p-tight { width: 50px; }
.p-util { width: 55px; }
.big { display: flex; flex-direction: column; align-items: center; flex: none; min-width: 30px; padding-top: 1px; }
.p-draw .big:first-child { min-width: 28px; }
.p-note .big { min-width: 32px; }
.p-tight .big { min-width: 27px; }
.big .dn { margin-top: 2px; }
.stack { flex: 1; display: grid; grid-template-rows: repeat(3, 18px); }
.p-note .stack { padding-left: 4px; }
.p-block .big { min-width: 28px; }
.row { display: flex; align-items: center; gap: 3px; text-align: left; }
.row .dn { margin-left: auto; margin-right: 3px; }
.split button { display: flex; align-items: center; justify-content: space-between; margin: 1px 1px 1px 0; padding: 0 2px; border: 1px solid #ddd; background: #f7f7f7; }
.split { padding-left: 1px; }
.modify { display: grid; grid-template: repeat(3, 18px) / 43px 43px 43px; padding-left: 4px; }
.boxed button { display: flex; align-items: center; justify-content: center; margin: 1px 1px 1px 0; border: 1px solid #ddd; background: #f5f5f5; }
.boxed .on { background: #a9cdf2; border-color: #3d78b8; }
.layers { display: grid; grid-template-rows: repeat(3, 18px); }
.layer-tools { display: flex; justify-content: flex-end; gap: 1px; padding: 1px 0; }
.layer-tools button { width: 17px; border: 1px solid #e0e0e0; }
.combo { display: flex; align-items: center; margin: 1px 0; padding: 0 3px 0 2px; border: 1px solid #d4d4d4; background: #fff; min-width: 0; }
.combo select { flex: 1; min-width: 0; }
.props { display: grid; grid-template: repeat(3, 18px) / 13px 1fr; column-gap: 1px; align-items: center; padding-right: 0; }
.props .combo { height: 16px; }
.swatch { width: 12px; height: 12px; border: 1px solid #444; margin-right: 1px; }
.rule { width: 46px; height: 1px; margin-right: 1px; background: #333; }
.rule.inset { width: 42px; margin-left: 4px; }

/* Drawing area */
.drawing { flex: 1; display: flex; min-height: 0; border-left: 1px solid #666; }
.canvas { position: relative; flex: 1; overflow: hidden; background: #000; }
.grid { position: absolute; inset: 0; }
.view-label { position: absolute; left: 4px; top: 3px; color: #ddd; }
.pickbox { position: absolute; left: 597px; top: 0; }
.ucs { position: absolute; left: 0; bottom: 4px; }
.cube { position: absolute; right: 12px; top: 10px; width: 56px; height: 56px; border: 5px solid #303030; border-radius: 50%; display: grid; place-items: center; color: #999; }
.cube button { width: 24px; height: 24px; background: #b4b4b4; color: #4c5058; font-size: 14px; line-height: 20px; }
.cube span { position: absolute; line-height: 10px; }
.cube .n { top: -7px; }
.cube .s { bottom: -7px; }
.cube .w { left: -7px; }
.cube .e { right: -7px; }
.wcs { position: absolute; right: 22px; top: 79px; width: 35px; height: 12px; display: flex; align-items: center; justify-content: space-around; border: 1px solid #8a8a96; border-radius: 3px; background: #77777f; color: #bbb; font-size: 8px; line-height: 10px; }
.navbar { position: absolute; right: 3px; top: 110px; }
.vscroll { width: 13px; display: flex; flex-direction: column; background: #f0f0f0; }
.vscroll button { height: 12px; display: grid; place-items: center; }
.vscroll .thumb { height: 13px; margin: 0 1px; background: #cdcdcd; }
.vscroll .end { margin-top: auto; }
.vscroll path, .hscroll path { fill: none; stroke: #444; }
.layouts { display: flex; align-items: center; flex: none; height: 16px; padding-left: 2px; border-bottom: 3px solid #666; background: #f0f0f0; color: #111; }
.step { width: 10px; height: 12px; display: grid; place-items: center; border-right: 1px solid #bbb; }
.step path { fill: #777; stroke: #777; stroke-width: 1; }
.sheet { padding: 0 3px; }
.sheet.current { background: #000; color: #fff; padding: 0 6px; margin: 0 2px 0 2px; clip-path: polygon(0 0, 100% 0, 84% 100%, 16% 100%); }
.hscroll { display: flex; align-items: center; margin-left: auto; width: 350px; height: 13px; border-left: 4px solid #ccc; padding: 0 17px 0 5px; }
.hscroll .thumb { width: 12px; height: 10px; background: #cdcdcd; margin-left: auto; margin-right: 5px; }

/* Command line */
.command { display: flex; flex: none; height: 43px; color: #222; font: 8px/11px "DejaVu Sans Mono", "Noto Sans CJK SC", monospace; }
.command b { font-size: 9px; }
.grip { width: 12px; background: #a2a2a2; border-top: 3px double #777; }
.console { flex: 1; display: flex; flex-direction: column; background: #c8c8c8; }
.history { flex: 1; padding: 1px; }
.prompt { display: flex; height: 13px; padding-left: 1px; background: #fff; border-top: 1px solid #eee; }
.prompt input { flex: 1; }

/* Status bar */
.status { display: flex; align-items: center; flex: none; height: 16px; border-top: 1px solid #555; background: linear-gradient(#969696, #7a7a7a); color: #111; }
.coords { width: 159px; padding-left: 8px; font-family: "Liberation Sans", sans-serif; }
.toggles { display: flex; align-self: stretch; }
.toggles button { width: 16px; display: grid; place-items: center; border-right: 1px solid #666; background: #a2a2a2; }
.toggles .lit { background: #a9d5e4; }
.tools { display: flex; align-self: stretch; margin-left: auto; padding-right: 1px; }
.tools button { display: flex; align-items: center; justify-content: center; width: 17px; background: #a6a6a6; border-right: 1px solid #777; }
.tools .model { width: 22px; }
.tools .gap { width: 18px; margin-right: 13px; }
.tools .scale { width: 38px; gap: 2px; }
.tools .bulb { width: 19px; background: #8a8578; }
.tools .more { width: 13px; }

/* Taskbar */
.taskbar { display: flex; flex: none; height: 29px; background: linear-gradient(90deg, #17262d, #182024 60%, #101820); color: #fff; }
.start { width: 35px; display: grid; place-items: center; }
.find { width: 252px; display: flex; align-items: center; gap: 6px; padding-left: 6px; background: #f2f2f2; color: #444; font-size: 10px; }
.find input { flex: 1; }
.find input::placeholder { color: #444; opacity: 1; }
.running { display: flex; gap: 6px; padding-left: 5px; }
.running i { width: 30px; border-bottom: 2px solid #f2d9ae; }
.running .front { width: 35px; background: #4a5256; }
.tray { display: flex; align-items: center; gap: 6px; margin-left: auto; margin-right: 3px; padding-right: 3px; border-right: 1px solid #566; }
.ime { margin-left: 3px; }
.clock { display: flex; flex-direction: column; align-items: center; margin-left: 4px; line-height: 14px; }

/* Drop-down menu */
.menu { position: absolute; left: 262px; top: 0; width: 180px; padding: 1px 2px; border: 1px solid #ccc; background: #f1f1f1; box-shadow: 2px 2px 3px #0008; color: #222; }
.set { padding-bottom: 2px; }
.set.long { padding-bottom: 3px; }
.set + .set { padding-top: 3px; background: linear-gradient(#d4d4d4, #d4d4d4) 22px 0 / 153px 1px no-repeat; }
.menu button { display: flex; align-items: center; width: 100%; height: 16px; }
.menu i { width: 16px; height: 16px; margin-right: 6px; display: grid; place-items: center; }
.menu .checked { background: #91c5f3; }
.sub { width: 5px; height: 7px; margin-left: auto; margin-right: 5px; color: #444; }
.menu kbd { margin-left: auto; margin-right: 12px; }
.abc { font: bold 5px/5px "Liberation Sans", sans-serif; fill: #444; }

/* Annotation and watermark */
.arrow { position: absolute; left: 333px; top: 164px; }
.watermark { position: absolute; right: 55px; bottom: 21px; color: #fff; opacity: .82; }
.brand { display: flex; align-items: flex-end; height: 58px; filter: drop-shadow(0 0 1px #777); }
.latin { font: bold 40px/42px "Liberation Sans", sans-serif; }
.paw { position: relative; }
.du { position: absolute; left: 0; right: 0; bottom: 2px; text-align: center; font: bold 24px/28px "Liberation Sans", sans-serif; color: #b4b4b4; }
.hanzi { font: 500 30px/42px "Noto Sans CJK SC", sans-serif; }
.url { font: 21px/26px "Open Sans", sans-serif; text-shadow: 0 0 1px #777; }
```
